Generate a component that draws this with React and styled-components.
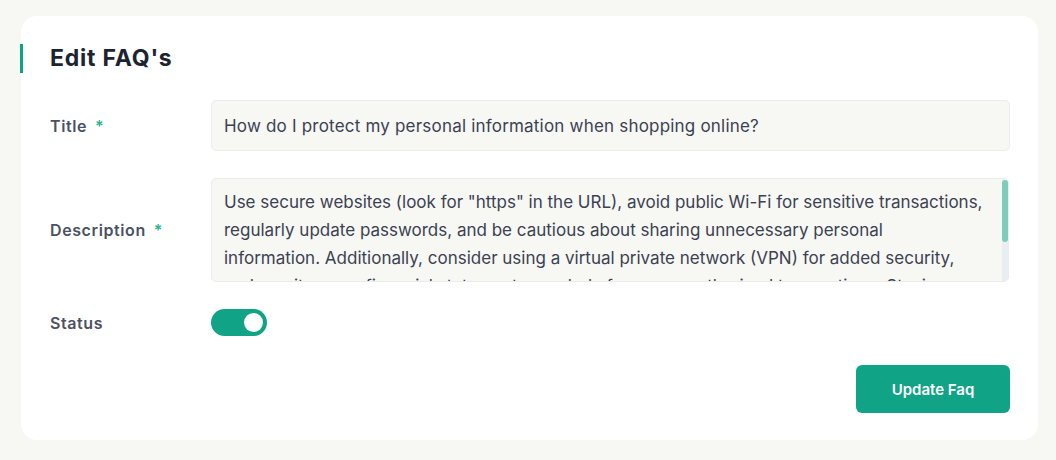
import React, { useState } from "react";
import styled, { createGlobalStyle } from "styled-components";

const GlobalStyle = createGlobalStyle`
  body {
    margin: 0;
    background: #f7f7f3;
    font-family: "Inter", "Liberation Sans", sans-serif;
  }
`;

const Page = styled.div`
  padding: 16px 18px 20px 21px;
`;

const Card = styled.div`
  background: #ffffff;
  border-radius: 16px;
  padding: 28px 28px 27px 29px;
  display: flex;
  flex-direction: column;
  gap: 27px;
`;

const Heading = styled.h2`
  position: relative;
  margin: 0;
  height: 29px;
  line-height: 29px;
  font-size: 23px;
  font-weight: 700;
  color: #1e2330;
  letter-spacing: 0.8px;

  &::before {
    content: "";
    position: absolute;
    left: -30px;
    top: 0;
    width: 3px;
    height: 29px;
    background: #0fa386;
  }
`;

const Row = styled.div`
  display: grid;
  grid-template-columns: 161px 1fr;
  align-items: center;
`;

const Label = styled.label`
  font-size: 16px;
  font-weight: 600;
  color: #4b5263;
  letter-spacing: 0.6px;
`;

const Star = styled.span`
  color: #2bb594;
  margin-left: 8px;
`;

const Input = styled.input`
  box-sizing: border-box;
  height: 51px;
  width: 799px;
  padding: 0 12px;
  background: #f7f7f4;
  border: 1px solid #ececea;
  border-radius: 5px;
  font-family: inherit;
  font-size: 17px;
  letter-spacing: 0.2px;
  color: #3b4252;
  outline: none;
`;

const AreaBox = styled.div`
  position: relative;
  width: 798px;
  height: 104px;
`;

const TextArea = styled.textarea`
  box-sizing: border-box;
  display: block;
  height: 104px;
  width: 100%;
  padding: 9px 25px 9px 12px;
  background: #f7f7f4;
  border: 1px solid #ececea;
  border-radius: 5px;
  font-family: inherit;
  font-size: 17px;
  line-height: 28px;
  color: #3b4252;
  resize: none;
  outline: none;
  overflow: hidden;
`;

const ScrollTrack = styled.div`
  position: absolute;
  top: 1px;
  right: 1px;
  bottom: 1px;
  width: 6px;
  background: #e9eef0;
  border-radius: 0 4px 4px 0;
`;

const ScrollThumb = styled.div`
  position: absolute;
  top: 1px;
  left: 0;
  width: 6px;
  height: 62px;
  border-radius: 3px;
  background: #7dcdbb;
`;

const SwitchCell = styled.div`
  display: flex;
  align-items: center;
`;

const Switch = styled.button`
  position: relative;
  width: 56px;
  height: 27px;
  border: none;
  border-radius: 14px;
  background: ${({ $on }) => ($on ? "#10a386" : "#cfd4da")};
  cursor: pointer;
  padding: 0;

  &::after {
    content: "";
    position: absolute;
    top: 4px;
    left: ${({ $on }) => ($on ? "33px" : "4px")};
    width: 19px;
    height: 19px;
    border-radius: 50%;
    background: #ffffff;
  }
`;

const Footer = styled.div`
  display: flex;
  justify-content: flex-end;
  margin-top: 2px;
`;

const Button = styled.button`
  width: 154px;
  height: 48px;
  border: none;
  border-radius: 6px;
  background: #10a386;
  color: #ffffff;
  font-family: "Inter", sans-serif;
  font-size: 15px;
  font-weight: 600;
  cursor: pointer;
`;

const description =
  'Use secure websites (look for "https" in the URL), avoid public Wi-Fi for sensitive transactions, regularly update passwords, and be cautious about sharing unnecessary personal information. Additionally, consider using a virtual private network (VPN) for added security, and monitor your financial statements regularly for any unauthorized transactions. Staying informed about common scams and phishing attempts will also help you shop online with confidence.';

const App = () => {
  const [on, setOn] = useState(true);
  return (
    <Page>
      <GlobalStyle />
      <Card>
        <Heading>Edit FAQ's</Heading>
        <Row>
          <Label>
            Title<Star>*</Star>
          </Label>
          <Input defaultValue="How do I protect my personal information when shopping online?" />
        </Row>
        <Row>
          <Label>
            Description<Star>*</Star>
          </Label>
          <AreaBox>
            <TextArea defaultValue={description} />
            <ScrollTrack>
              <ScrollThumb />
            </ScrollTrack>
          </AreaBox>
        </Row>
        <Row>
          <Label>Status</Label>
          <SwitchCell>
            <Switch $on={on} onClick={() => setOn(!on)} />
          </SwitchCell>
        </Row>
        <Footer>
          <Button>Update Faq</Button>
        </Footer>
      </Card>
    </Page>
  );
};

export default App;
